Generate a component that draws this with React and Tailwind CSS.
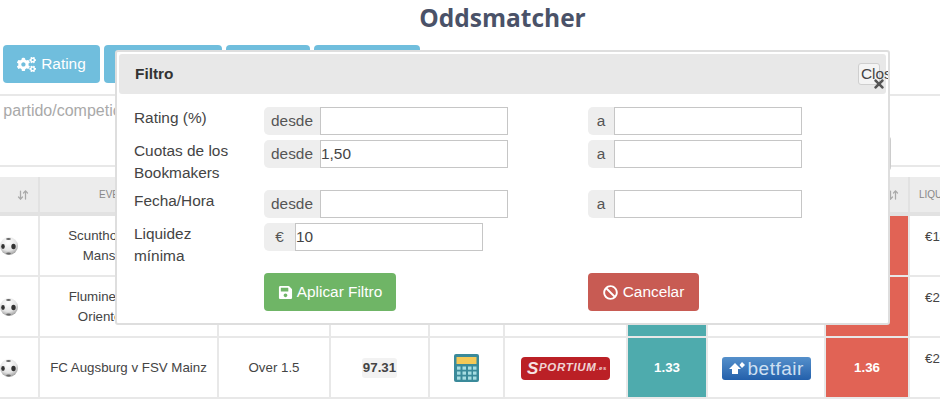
import React from 'react';
import { FaBan, FaCogs, FaSave, FaTimes } from 'react-icons/fa';
import { ArrowDownUp } from 'lucide-react';

const COLS = 'grid grid-cols-[40px_179px_112px_99px_75px_123px_80px_118px_84px_30px]';

const SoccerBall = () => (
    <svg width="18" height="18" viewBox="0 0 18 18">
        <defs>
            <radialGradient id="ball" cx="45%" cy="30%" r="75%">
                <stop offset="0%" stopColor="#ffffff" />
                <stop offset="60%" stopColor="#e4e4e4" />
                <stop offset="100%" stopColor="#8f8f8f" />
            </radialGradient>
            <filter id="soft"><feGaussianBlur stdDeviation="0.5" /></filter>
        </defs>
        <circle cx="9" cy="9" r="9" fill="url(#ball)" />
        <g filter="url(#soft)">
            <ellipse cx="3" cy="9.5" rx="1.8" ry="2.4" fill="#333" />
            <ellipse cx="13.5" cy="9.5" rx="2.2" ry="2.8" fill="#333" />
            <ellipse cx="8.5" cy="2" rx="2.4" ry="1.1" fill="#666" />
            <ellipse cx="8.5" cy="16.4" rx="2.4" ry="1" fill="#666" />
        </g>
    </svg>
);

const Calculator = () => (
    <svg width="25" height="28" viewBox="0 0 25 28">
        <rect width="25" height="28" rx="2" fill="#3a8a9a" />
        <rect x="2.5" y="3" width="20" height="7" fill="#f5c956" />
        {[12.5, 17.5, 22.5].map((y) => [3, 8.5, 14, 19].map((x) => (
            <rect key={`${x}-${y}`} x={x} y={y} width="3.5" height="3.2" fill="#a6dde2" />
        )))}
    </svg>
);

const SportiumLogo = () => (
    <div className="flex h-[23px] w-[89px] items-center justify-center rounded-[4px] bg-[#bb2026] pl-[3px] text-[11.5px] font-bold italic tracking-[0.7px] text-[#f0d4d4]">
        <span className="text-[17px] leading-none text-[#f6e3e3]">S</span>PORTIUM<span className="text-[6px]">.es</span>
    </div>
);

const BetfairLogo = () => (
    <div className="flex h-[23px] w-[89px] items-center gap-[3px] rounded-[3px] bg-gradient-to-b from-[#5590cb] to-[#2360ab] pl-[7px] text-[#cfe0f2]">
        <svg width="16" height="13" viewBox="0 0 16 13" className="shrink-0">
            <path d="M6 1 L12 7 H9 V12 H3 V7 H0 Z" fill="#fff" />
            <path d="M13 0 L16 3 L13 6 L10.5 3 Z" fill="#fff" />
        </svg>
        <span className="text-[19px] leading-none tracking-[0.5px]">betfair</span>
    </div>
);

const Cell = ({ className = '', children }) => (
    <div className={`flex items-center justify-center border-r-2 border-b-2 border-[#e8e8e8] pt-px text-center ${className}`}>
        {children}
    </div>
);

const rows = [
    { event: <>Scunthorpe United v<br />Mansfield Town</>, liquidity: '€143' },
    { event: <>Fluminense RJ (F) v<br />Oriente Petrolero</>, liquidity: '€251' },
    { event: 'FC Augsburg v FSV Mainz', market: 'Over 1.5', rating: '97.31', back: '1.33', lay: '1.36', liquidity: '€263', logos: true }
];

const InputGroup = ({ addon, value = '', addonWidth = 'w-[56px]', inputWidth = 'w-[188px]' }) => (
    <div className="flex h-[28px]">
        <span className={`flex items-center justify-center rounded-l-[5px] bg-[#eeeeee] text-[15.4px] text-[#555] ${addonWidth}`}>{addon}</span>
        <input
            readOnly
            value={value}
            className={`h-full border border-[#c6c6c6] bg-white px-0 text-[15.4px] text-[#444] outline-none ${inputWidth}`}
        />
    </div>
);

const FilterRow = ({ label, className = '', children }) => (
    <div className={`grid grid-cols-[130px_324px_1fr] text-[15.4px] leading-[22px] text-[#444] ${className}`}>
        <div>{label}</div>
        {children}
    </div>
);

const App = () => (
    <div className="relative h-[400px] w-[940px] overflow-hidden bg-white [font-family:'Liberation_Sans',sans-serif]">
        <h1 className="h-[45px] pl-[65px] pt-px text-center text-[24.5px] font-bold leading-[34px] text-[#4a5268] [font-family:'Open_Sans',sans-serif]">
            Oddsmatcher
        </h1>

        <div className="flex h-[38px] gap-[4px] pl-[3px]">
            <button className="flex w-[97px] items-center justify-center gap-[5px] rounded-[4px] bg-[#70bedd] text-[15.4px] text-white">
                <FaCogs className="size-[19px]" /> Rating
            </button>
            <div className="w-[118px] rounded-[4px] bg-[#70bedd]" />
            <div className="w-[84px] rounded-[4px] bg-[#70bedd]" />
            <div className="w-[106px] rounded-[4px] bg-[#70bedd]" />
        </div>

        <div className="mt-[11px] h-[73px] border-y-2 border-[#e8e8e8] pr-[49px] pt-[6px]">
            <div className="relative h-full">
                <span className="absolute -left-[26px] -top-[3px] whitespace-nowrap text-[16px] text-[#a9a9a9]">Por partido/competición</span>
                <div className="absolute right-0 top-[34px] h-[35px] w-[60px] rounded-r-[4px] border-r-2 border-[#cccccc]" />
            </div>
        </div>

        <div className={`${COLS} mt-[10px] h-[39px] border-b-4 border-[#e2e2e2] bg-[#ececec] text-[10px] text-[#888]`}>
            <div className="flex items-center justify-end border-r-2 border-[#e2e2e2] pr-[9px] text-[#aaa]">
                <ArrowDownUp className="size-[12px]" strokeWidth={2.5} />
            </div>
            <div className="flex items-center justify-center pr-[20px]">EVENTO</div>
            <div className="col-span-6" />
            <div className="flex items-center justify-end border-r-2 border-[#e2e2e2] pr-[9px] text-[#aaa]">
                <ArrowDownUp className="size-[12px]" strokeWidth={2.5} />
            </div>
            <div className="flex items-center overflow-hidden whitespace-nowrap pl-[9px]">LIQUIDEZ</div>
        </div>

        {rows.map((row, index) => (
            <div key={index} className={`${COLS} h-[61px] text-[13.3px] text-[#444]`}>
                <Cell className="justify-start"><SoccerBall /></Cell>
                <Cell>{row.event}</Cell>
                <Cell>{row.market}</Cell>
                <Cell className="font-bold"><span className="rounded-[3px] bg-[#f2f2f2] px-px">{row.rating}</span></Cell>
                <Cell>{row.logos && <Calculator />}</Cell>
                <Cell>{row.logos && <SportiumLogo />}</Cell>
                <Cell className="bg-[#4eabad] font-bold text-white">{row.back}</Cell>
                <Cell>{row.logos && <BetfairLogo />}</Cell>
                <Cell className="bg-[#e16355] font-bold text-white">{row.lay}</Cell>
                <div className="overflow-hidden whitespace-nowrap border-b-2 border-[#e8e8e8] pl-[15px] pt-[11px]">{row.liquidity}</div>
            </div>
        ))}

        <div className="absolute left-[115px] top-[50px] h-[275px] w-[775px] overflow-hidden rounded-[3px] border-2 border-[#dedede] bg-white p-[2px]">
            <div className="relative flex h-[40px] items-center rounded-[3px] bg-[#e8e8e8] pl-[16px] text-[15.4px] font-bold text-[#333]">
                Filtro
                <button className="absolute left-[739px] top-[9px] h-[22px] w-[22px] whitespace-nowrap rounded-[3px] border border-[#cfcfcf] bg-[#f4f4f4] pl-[2px] text-left text-[15.4px] font-normal leading-[20px] text-[#444]">
                    Close
                </button>
                <FaTimes className="absolute left-[753px] top-[23px] size-[14px] text-[#555]" />
            </div>

            <div className="pl-[15px] pt-[13px]">
                <FilterRow label="Rating (%)" className="h-[33px]">
                    <InputGroup addon="desde" />
                    <InputGroup addon="a" addonWidth="w-[26px]" />
                </FilterRow>
                <FilterRow label={<>Cuotas de los<br />Bookmakers</>} className="h-[50px]">
                    <InputGroup addon="desde" value="1,50" />
                    <InputGroup addon="a" addonWidth="w-[26px]" />
                </FilterRow>
                <FilterRow label="Fecha/Hora" className="h-[33px]">
                    <InputGroup addon="desde" />
                    <InputGroup addon="a" addonWidth="w-[26px]" />
                </FilterRow>
                <FilterRow label={<>Liquidez<br />mínima</>} className="h-[50px]">
                    <InputGroup addon="€" value="10" addonWidth="w-[31px]" />
                </FilterRow>
                <div className="grid grid-cols-[130px_324px_1fr]">
                    <div />
                    <button className="flex h-[38px] w-[132px] items-center justify-center gap-[4px] rounded-[4px] bg-[#6fb566] text-[15.4px] text-white">
                        <FaSave className="size-[15px]" /> Aplicar Filtro
                    </button>
                    <button className="flex h-[38px] w-[111px] items-center justify-center gap-[5px] rounded-[4px] bg-[#c85b53] text-[15.4px] text-white">
                        <FaBan className="size-[15px]" /> Cancelar
                    </button>
                </div>
            </div>
        </div>
    </div>
);

export default App;
